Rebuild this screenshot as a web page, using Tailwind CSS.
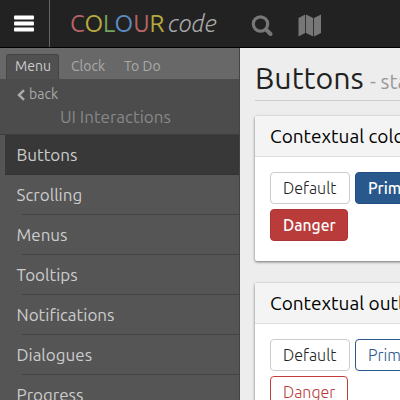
<!DOCTYPE html>
<html lang="en">
<head>
<meta charset="utf-8">
<title>COLOURcode</title>
<script src="https://cdn.jsdelivr.net/npm/@tailwindcss/browser@4"></script>
</head>
<body class="h-[400px] w-[400px] overflow-hidden bg-[#ededed] font-['Ubuntu','Noto_Sans',sans-serif] whitespace-nowrap">
<header class="flex h-12 w-[400px] items-center overflow-hidden border-b border-black bg-[#222]">
  <div class="flex h-full w-[50px] shrink-0 items-center border-r border-[#666] pl-[14px]">
    <svg class="mt-px h-[18px] w-5" viewBox="0 0 20 18" fill="#fff"><rect y="0.5" width="20" height="4" rx="1"/><rect y="6.5" width="20" height="4" rx="1"/><rect y="12.5" width="20" height="4" rx="1"/></svg>
  </div>
  <div class="flex w-[201px] shrink-0 items-baseline pl-5 text-[24px] leading-none">
    <span class="w-[98px]"><span class="text-[#b56464]">C</span><span class="text-[#b8a83f]">O</span><span class="text-[#74a55a]">L</span><span class="text-[#5c8cc0]">O</span><span class="text-[#b56464]">U</span><span class="text-[#b8a83f]">R</span></span>
    <span class="font-light text-[#aaa] italic">code</span>
  </div>
  <svg class="mt-1 h-[22px] w-[22px] shrink-0" viewBox="0 0 22 22" fill="none" stroke="#777" stroke-linecap="round"><circle cx="9.5" cy="9" r="7.2" stroke-width="3.2"/><path d="M15.2 14.7 19.5 19" stroke-width="4"/></svg>
  <svg class="mt-1 ml-[25px] h-[23px] w-6 shrink-0" viewBox="0 0 24 23" fill="#777"><path d="M.5 4 7.2 .5V19L.5 22.5ZM8 .5 15.2 4V22.5L8 19ZM16 4 23 .5V19L16 22.5Z"/></svg>
</header>
<div class="flex h-[352px]">
  <nav class="flex w-60 shrink-0 flex-col overflow-hidden border-r border-[#444] bg-[#555]">
    <div class="flex h-[31px] shrink-0 items-end bg-[#686868] pl-1.5 text-[14px] leading-[23px] text-[#aaa]">
      <div class="h-[25px] w-[53px] rounded-t-[3px] border border-b-0 border-[#444] bg-[#505050] pl-2 text-[#ccc]">Menu</div>
      <div class="h-6 w-[65px] pl-3">Clock</div>
      <div class="h-6">To Do</div>
    </div>
    <div class="h-14 shrink-0 border-b border-[#3d3d3d] bg-[#4c4c4c] pt-[5px]">
      <div class="flex h-5 items-center pl-[17px] text-[14px] text-[#aaa]">
        <svg class="mt-px mr-1 h-3 w-2" viewBox="0 0 8 12" fill="none" stroke="#aaa" stroke-width="2.5"><path d="M7 1.2 2 6 7 10.8"/></svg>
        <span>back</span>
      </div>
      <div class="flex h-[26px] items-center pl-[60px] text-[17px] text-[#888]"><span>UI Interactions</span></div>
    </div>
    <ul class="text-[17px] leading-[39px] text-[#ccc]">
      <li class="ml-[5px] h-10 border-b border-[#333] bg-[#383838] pl-[11.5px]">Buttons</li>
      <li class="pl-[16.5px]">Scrolling<hr class="ml-[5px] border-[#444]"></li>
      <li class="pl-[16.5px]">Menus<hr class="ml-[5px] border-[#444]"></li>
      <li class="pl-[16.5px]">Tooltips<hr class="ml-[5px] border-[#444]"></li>
      <li class="pl-[16.5px]">Notifications<hr class="ml-[5px] border-[#444]"></li>
      <li class="pl-[16.5px]">Dialogues<hr class="ml-[5px] border-[#444]"></li>
      <li class="pl-[16.5px]">Progress</li>
    </ul>
  </nav>
  <main class="w-40 shrink-0 overflow-hidden pt-[9px] pl-[15px]">
    <h1 class="flex h-11 w-[300px] items-baseline border-b border-[#ccc] text-[30.4px] leading-[42px] text-[#222]"><span class="w-[115px]">Buttons</span><span class="text-[20.5px] text-[#999]">- states</span></h1>
    <section class="mt-[15px] h-[145px] w-[300px] rounded-[2px] bg-white shadow-[0_1px_3px_rgba(0,0,0,0.55)]">
      <h2 class="h-[41px] rounded-t-[2px] border-b border-[#ddd] bg-[#f4f4f4] pl-[15px] text-[19px] leading-10 text-black">Contextual colours</h2>
      <div class="flex flex-col gap-[5px] pt-[15px] pl-[15px] text-[16px] leading-[30px]">
        <div class="flex gap-[5px]">
          <div class="h-8 w-20 rounded border border-[#ccc] pl-3 font-light text-[#222]">Default</div>
          <div class="h-8 w-[84px] rounded border border-[#204d82] bg-[#28588c] pl-3 font-medium text-white"><span class="inline-block origin-left scale-x-[0.98]">Primary</span></div>
        </div>
        <div class="h-8 w-[78px] rounded border border-[#ac3434] bg-[#b93c3a] pl-3 font-medium text-white"><span class="inline-block origin-left scale-x-[0.98]">Danger</span></div>
      </div>
    </section>
    <section class="mt-[22px] h-[145px] w-[300px] rounded-[2px] bg-white shadow-[0_1px_3px_rgba(0,0,0,0.55)]">
      <h2 class="h-[41px] rounded-t-[2px] border-b border-[#ddd] bg-[#f4f4f4] pl-[15px] text-[19px] leading-10 text-black">Contextual outlines</h2>
      <div class="flex flex-col gap-[5px] pt-[15px] pl-[15px] text-[16px] leading-[30px] font-light">
        <div class="flex gap-[5px]">
          <div class="h-8 w-20 rounded border border-[#ccc] pl-3 text-[#222]">Default</div>
          <div class="h-8 w-[84px] rounded border border-[#28588c] pl-3 text-[#28588c]">Primary</div>
        </div>
        <div class="h-8 w-[78px] rounded border border-[#c43c3a] pl-3 text-[#b93c3a]">Danger</div>
      </div>
    </section>
  </main>
</div>
</body>
</html>
